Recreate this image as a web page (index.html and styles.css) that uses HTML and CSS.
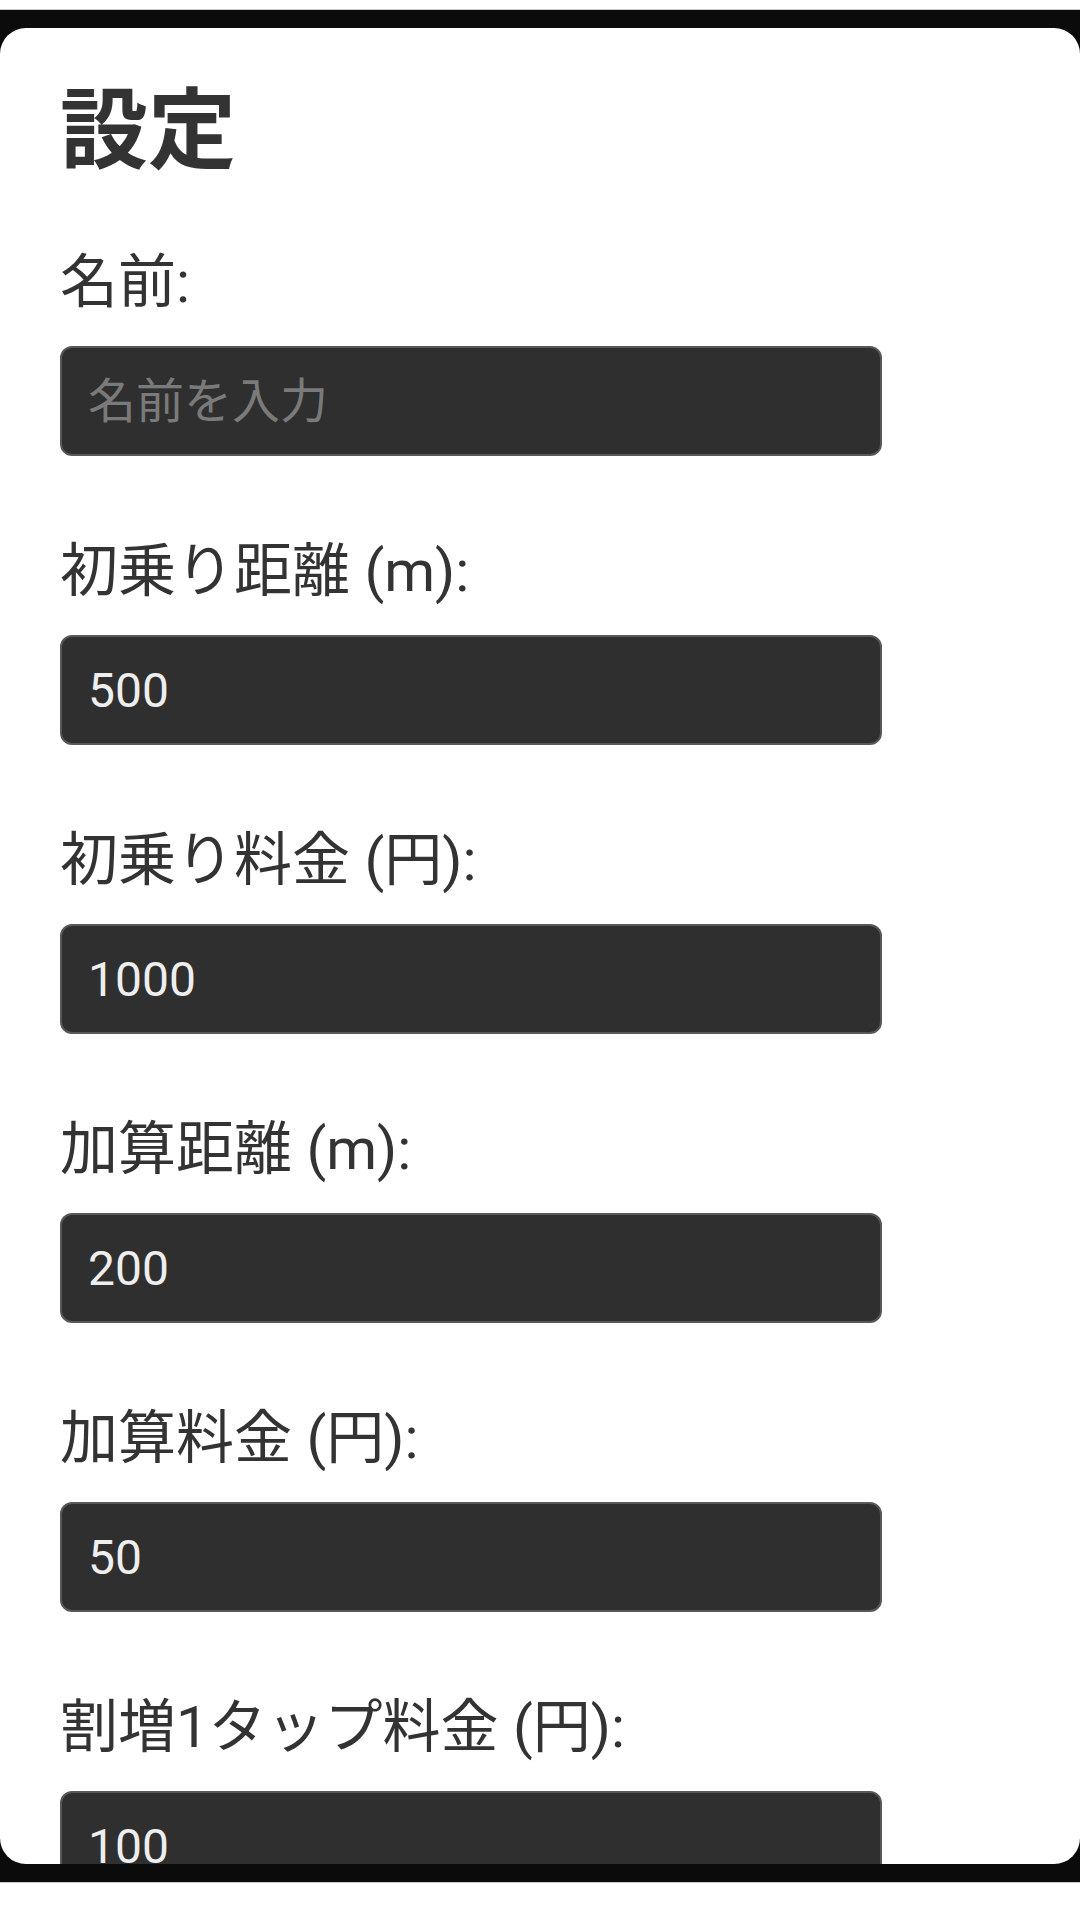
FILE: index.html
```html
<!DOCTYPE html>
<html lang="ja">
<head>
<meta charset="utf-8">
<title>設定</title>
<link rel="stylesheet" href="styles.css">
</head>
<body>
<div class="frame">
  <main class="sheet">
    <h1 class="title">設定</h1>
    <form class="form">
      <div class="field">
        <label class="label" for="name">名前:</label>
        <input class="input" id="name" type="text" placeholder="名前を入力">
      </div>
      <div class="field">
        <label class="label" for="base-dist">初乗り距離 (m):</label>
        <input class="input" id="base-dist" type="text" value="500">
      </div>
      <div class="field">
        <label class="label" for="base-fare">初乗り料金 (円):</label>
        <input class="input" id="base-fare" type="text" value="1000">
      </div>
      <div class="field">
        <label class="label" for="add-dist">加算距離 (m):</label>
        <input class="input" id="add-dist" type="text" value="200">
      </div>
      <div class="field">
        <label class="label" for="add-fare">加算料金 (円):</label>
        <input class="input" id="add-fare" type="text" value="50">
      </div>
      <div class="field">
        <label class="label" for="tap-fare">割増1タップ料金 (円):</label>
        <input class="input" id="tap-fare" type="text" value="100">
      </div>
    </form>
  </main>
</div>
</body>
</html>
```

FILE: styles.css
```css
html, body {
  margin: 0;
  padding: 0;
  background: #ffffff;
}

body {
  font-family: Roboto, "Noto Sans CJK JP", sans-serif;
  color: #333333;
}

/* dark backdrop behind the rounded sheet */
.frame {
  margin-top: 9px;
  border-top: 1px solid #c8c8c8;
  border-bottom: 1px solid #c8c8c8;
  background: #0b0b0b;
  padding: 18px 0 18px;
}

.sheet {
  height: 1836px;
  box-sizing: border-box;
  background: #ffffff;
  border-radius: 26px;
  overflow: hidden;
  padding: 43px 60px 0;
}

.title {
  margin: 0 0 55px;
  font-size: 88px;
  line-height: 120px;
  font-weight: 700;
  color: #333333;
}

.form {
  display: flex;
  flex-direction: column;
  gap: 79px;
}

.field {
  display: flex;
  flex-direction: column;
  gap: 28px;
}

.label {
  display: block;
  font-size: 58px;
  line-height: 72px;
  color: #333333;
}

.input {
  display: block;
  width: 822px;
  height: 110px;
  box-sizing: border-box;
  margin: 0;
  padding: 0 26px;
  border: 2px solid #585858;
  border-radius: 12px;
  background: #2f2f2f;
  color: #eeeeee;
  font-family: Roboto, "Noto Sans CJK JP", sans-serif;
  font-size: 48px;
  outline: none;
}

.input::placeholder {
  color: #7a7a7a;
}
```
